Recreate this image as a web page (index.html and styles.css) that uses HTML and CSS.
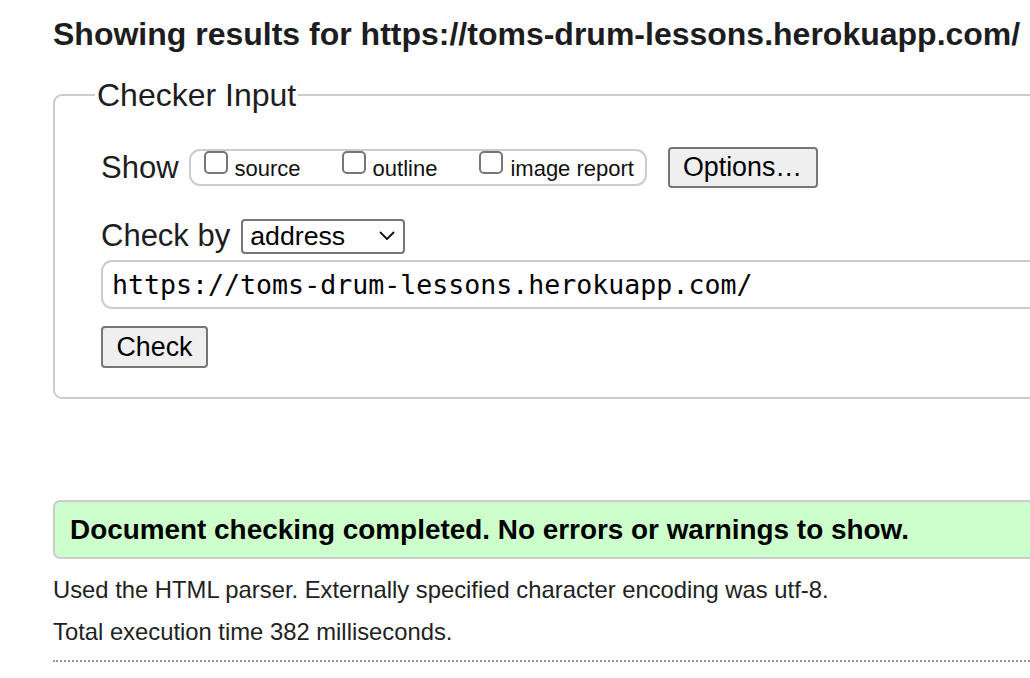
FILE: index.html
```html
<!DOCTYPE html>
<html lang="en">
<head>
<meta charset="utf-8">
<title>Showing results for https://toms-drum-lessons.herokuapp.com/ - Nu Html Checker</title>
<link rel="stylesheet" href="styles.css">
</head>
<body>
<div class="page">
  <h2 class="title">Showing results for https://toms-drum-lessons.herokuapp.com/</h2>
  <form class="checker">
    <fieldset class="input-set">
      <legend class="legend">Checker Input</legend>
      <div class="row show-row">
        <span class="label">Show</span>
        <span class="show-group">
          <label class="opt opt-source"><span class="box"></span><span class="opt-text">source</span></label>
          <label class="opt opt-outline"><span class="box"></span><span class="opt-text">outline</span></label>
          <label class="opt opt-image"><span class="box"></span><span class="opt-text">image report</span></label>
        </span>
        <button type="button" class="btn btn-options">Options…</button>
      </div>
      <div class="row by-row">
        <span class="label">Check by</span>
        <span class="select">
          <span class="select-text">address</span>
          <svg class="chev" width="16" height="10" viewBox="0 0 16 10"><path d="M1.5 1.5 L8 8 L14.5 1.5" fill="none" stroke="#111" stroke-width="1.8" stroke-linecap="round" stroke-linejoin="round"/></svg>
        </span>
      </div>
      <div class="url-box">https://toms-drum-lessons.herokuapp.com/</div>
      <div class="row check-row">
        <button type="button" class="btn btn-check">Check</button>
      </div>
    </fieldset>
  </form>
  <p class="success">Document checking completed. No errors or warnings to show.</p>
  <p class="details">Used the HTML parser. Externally specified character encoding was utf-8.</p>
  <p class="details">Total execution time 382 milliseconds.</p>
  <hr class="sep">
</div>
</body>
</html>
```
FILE: styles.css
```css
html, body {
  margin: 0;
  padding: 0;
  overflow: hidden;
  background: #fff;
}
body {
  font-family: "Liberation Sans", Arial, sans-serif;
  color: #222;
}
.page {
  width: 1200px;
  padding: 16px 0 0 53px;
}
.title {
  margin: 0;
  font-size: 32px;
  font-weight: bold;
  line-height: 36px;
  color: #1d1d1f;
}
.checker {
  margin: 24px 0 0 0;
}
.input-set {
  margin: 0;
  border: 2px solid #ccc;
  border-radius: 9px;
  padding: 33px 0 29px 46px;
  min-width: 0;
}
.legend {
  font-size: 32px;
  padding: 0 2px;
  margin-left: -6px;
  line-height: 38px;
  color: #1d1d1f;
}
.row {
  display: flex;
  align-items: center;
}
.label {
  font-size: 31px;
  line-height: 36px;
  color: #1d1d1f;
}
.show-group {
  display: flex;
  align-items: flex-start;
  margin-left: 10px;
  height: 33px;
  width: 454px;
  border: 2px solid #ccc;
  border-radius: 11px;
  box-sizing: content-box;
  padding: 0;
}
.opt {
  display: flex;
  align-items: flex-start;
  font-size: 22px;
  color: #111;
}
.opt-source { margin-left: 13px; }
.opt-outline { margin-left: 41px; }
.opt-image { margin-left: 42px; }
.box {
  width: 24px;
  height: 23px;
  border: 2px solid #767676;
  border-radius: 5px;
  box-sizing: border-box;
  background: #fff;
}
.opt-text {
  margin-left: 7px;
  margin-top: 6px;
  line-height: 24px;
}
.btn {
  font-family: "Liberation Sans", Arial, sans-serif;
  background: #efefef;
  border: 2px solid #767676;
  border-radius: 4px;
  color: #000;
  padding: 0;
}
.btn-options {
  margin-left: 21px;
  width: 150px;
  height: 41px;
  font-size: 26.8px;
}
.by-row {
  margin-top: 30px;
}
.select {
  display: flex;
  align-items: center;
  justify-content: space-between;
  margin-left: 11px;
  width: 164px;
  height: 35px;
  box-sizing: border-box;
  border: 2px solid #767676;
  border-radius: 4px;
  padding: 0 8px 0 7px;
  font-size: 26.7px;
  color: #000;
}
.chev { display: block; }
.url-box {
  margin-top: 6px;
  height: 49px;
  box-sizing: border-box;
  border: 2px solid #ccc;
  border-right: none;
  border-radius: 11px 0 0 11px;
  padding: 0 0 0 9px;
  display: flex;
  align-items: center;
  font-family: "DejaVu Sans Mono", monospace;
  font-size: 26.6px;
  color: #000;
  margin-right: -10px;
}
.check-row {
  margin-top: 17px;
}
.btn-check {
  width: 107px;
  height: 42px;
  font-size: 26.8px;
}
.success {
  margin: 101px 0 0 0;
  height: 59px;
  box-sizing: border-box;
  background: #ccffcc;
  border: 2px solid #ccc;
  border-radius: 7px;
  padding: 0 0 0 15px;
  display: flex;
  align-items: center;
  font-size: 27.9px;
  font-weight: bold;
  color: #000;
}
.details {
  margin: 17px 0 0 0;
  font-size: 23.8px;
  line-height: 28px;
  color: #222;
}
.details + .details {
  margin-top: 14px;
}
.sep {
  margin: 14px 0 0 0;
  border: none;
  border-top: 2px dotted #999;
  height: 0;
}
```
